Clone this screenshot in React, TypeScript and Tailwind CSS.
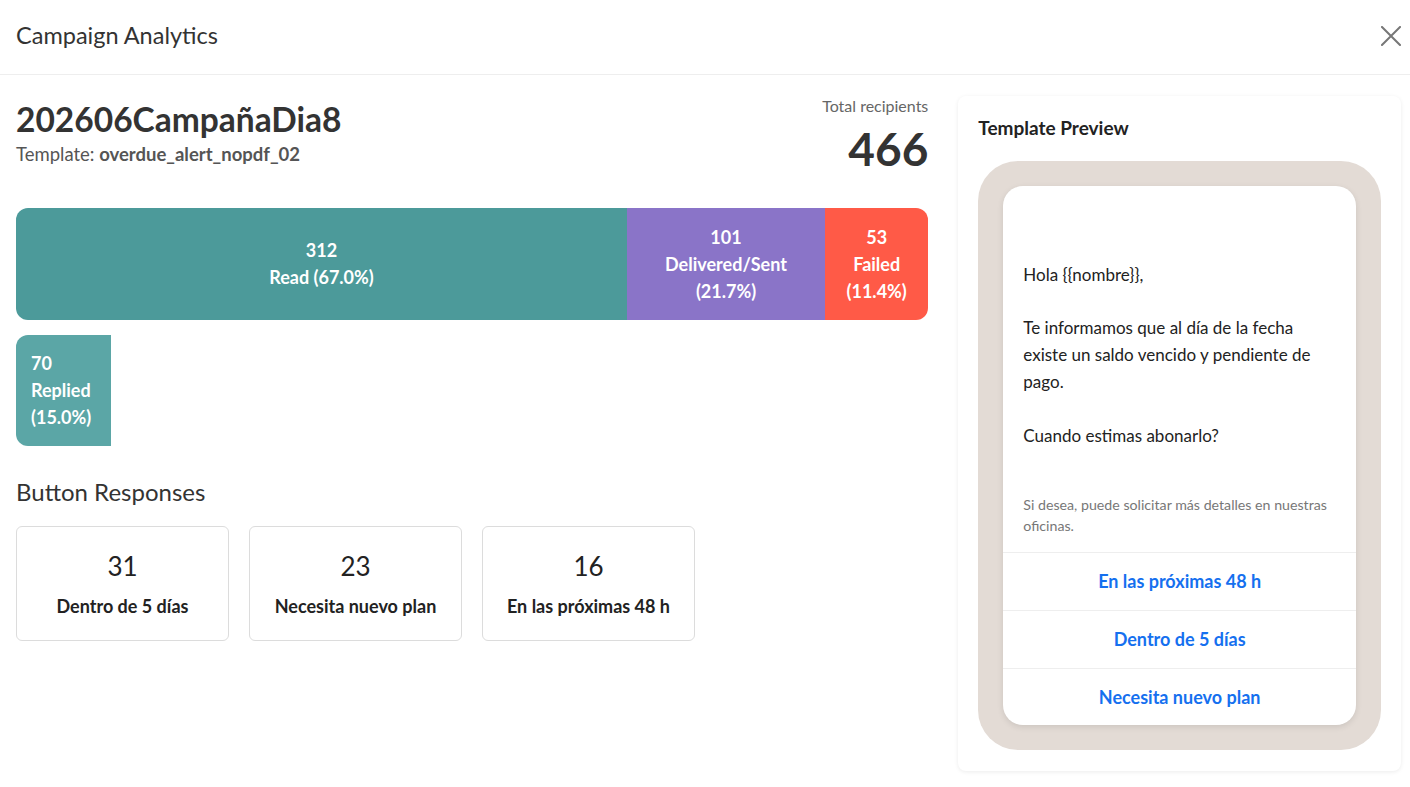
import React from "react";

const font = { fontFamily: "Lato, 'Noto Sans', sans-serif" };

function StatBlock({ count, lines, className }: { count: number; lines: string[]; className: string }) {
  return (
    <div className={`flex flex-col items-center justify-center text-white font-bold text-[18px] leading-[27px] text-center ${className}`}>
      <span>{count}</span>
      {lines.map((l) => (
        <span key={l}>{l}</span>
      ))}
    </div>
  );
}

function ResponseCard({ n, label }: { n: number; label: string }) {
  return (
    <div className="w-[213px] h-[115px] border border-[#dcdcdc] rounded-md flex flex-col items-center justify-center">
      <div className="text-[26px] leading-none text-[#222] mt-1">{n}</div>
      <div className="text-[18px] leading-6 font-bold text-[#222] mt-[15px]">{label}</div>
    </div>
  );
}

export default function App() {
  return (
    <div className="w-[1410px] h-[787px] bg-white text-[#333] overflow-hidden" style={font}>
      {/* header */}
      <div className="h-[75px] border-b border-[#eeeeee] flex items-center justify-between pl-4 pr-[9px]">
        <h1 className="text-[23.5px] text-[#333] pb-[3px]">Campaign Analytics</h1>
        <button className="w-[20px] h-[20px] text-[#777] mb-[2px]">
          <svg viewBox="0 0 20 20" width="20" height="20" stroke="currentColor" strokeWidth="2" strokeLinecap="square">
            <path d="M1 1 L19 19 M19 1 L1 19" />
          </svg>
        </button>
      </div>

      <div className="flex pl-4 pr-[9px] pt-[21px] gap-[30px]">
        {/* left column */}
        <div className="w-[913px] flex flex-col">
          <div className="flex justify-between items-start">
            <div className="pt-[3px]">
              <div className="text-[33.5px] font-bold leading-[40px] text-[#333]">202606CampañaDia8</div>
              <div className="text-[18.5px] leading-6 text-[#555] mt-[3px]">
                Template: <span className="font-bold">overdue_alert_nopdf_02</span>
              </div>
            </div>
            <div className="flex flex-col items-end">
              <div className="text-[16px] text-[#666] leading-5">Total recipients</div>
              <div className="text-[46px] font-bold leading-[52px] text-[#333] mt-[7px]">466</div>
            </div>
          </div>

          <div className="flex h-[112px] mt-[33px] rounded-xl overflow-hidden">
            <StatBlock count={312} lines={["Read (67.0%)"]} className="w-[611px] bg-[#4c9a9a]" />
            <StatBlock count={101} lines={["Delivered/Sent", "(21.7%)"]} className="w-[198px] bg-[#8a74c8]" />
            <StatBlock count={53} lines={["Failed", "(11.4%)"]} className="flex-1 bg-[#ff5a47]" />
          </div>

          <div className="w-[95px] h-[111px] mt-[15px] rounded-l-xl bg-[#5ba6a6] text-white font-bold text-[18px] leading-[27px] pl-[15px] flex flex-col justify-center">
            <span>70</span>
            <span>Replied</span>
            <span>(15.0%)</span>
          </div>

          <h2 className="text-[24px] leading-8 text-[#333] mt-[30px]">Button Responses</h2>
          <div className="flex gap-5 mt-[18px]">
            <ResponseCard n={31} label="Dentro de 5 días" />
            <ResponseCard n={23} label="Necesita nuevo plan" />
            <ResponseCard n={16} label="En las próximas 48 h" />
          </div>
        </div>

        {/* right column */}
        <div className="w-[443px] h-[675px] rounded-lg bg-white shadow-[0_1px_4px_rgba(0,0,0,0.08)] px-5 pt-[20px]">
          <div className="text-[19px] leading-6 font-bold text-[#222]">Template Preview</div>
          <div className="mt-[21px] h-[589px] rounded-[40px] bg-[#e3dbd5] p-[25px]">
            <div className="h-full bg-white rounded-[20px] shadow-[0_2px_6px_rgba(0,0,0,0.1)] flex flex-col">
              <div className="px-5 pt-[75px] text-[17px] leading-[27px] text-[#222]">
                <p>Hola {"{{nombre}}"},</p>
                <p className="mt-[26px]">Te informamos que al día de la fecha existe un saldo vencido y pendiente de pago.</p>
                <p className="mt-[27px]">Cuando estimas abonarlo?</p>
                <p className="mt-[45px] text-[14.2px] leading-[21px] text-[#777]">
                  Si desea, puede solicitar más detalles en nuestras oficinas.
                </p>
              </div>
              <div className="mt-[16px] flex flex-col text-[18px] font-bold text-[#1570ef]">
                <div className="h-[58px] border-t border-[#eeeeee] flex items-center justify-center">En las próximas 48 h</div>
                <div className="h-[58px] border-t border-[#eeeeee] flex items-center justify-center">Dentro de 5 días</div>
                <div className="h-[58px] border-t border-[#eeeeee] flex items-center justify-center">Necesita nuevo plan</div>
              </div>
            </div>
          </div>
        </div>
      </div>
    </div>
  );
}
